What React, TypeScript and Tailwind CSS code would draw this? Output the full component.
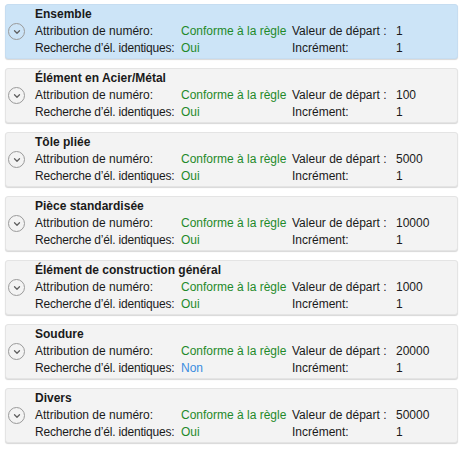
import { ChevronDown } from 'lucide-react';

interface Category {
  name: string;
  identical: 'Oui' | 'Non';
  start: string;
  increment: string;
  selected?: boolean;
}

const categories: Category[] = [
  { name: 'Ensemble', identical: 'Oui', start: '1', increment: '1', selected: true },
  { name: 'Élément en Acier/Métal', identical: 'Oui', start: '100', increment: '1' },
  { name: 'Tôle pliée', identical: 'Oui', start: '5000', increment: '1' },
  { name: 'Pièce standardisée', identical: 'Oui', start: '10000', increment: '1' },
  { name: 'Élément de construction général', identical: 'Oui', start: '1000', increment: '1' },
  { name: 'Soudure', identical: 'Non', start: '20000', increment: '1' },
  { name: 'Divers', identical: 'Oui', start: '50000', increment: '1' },
];

function CategoryCard({ cat }: { cat: Category }) {
  return (
    <div
      className={`relative h-[55px] rounded-[3px] border shadow-[0_1px_1px_rgba(0,0,0,0.16)] ${
        cat.selected ? 'bg-[#cce4f7] border-[#c6ddf1]' : 'bg-[#f3f3f3] border-[#e4e4e4]'
      }`}
    >
      {/* Expander */}
      <div className="absolute left-[2px] top-[18px] flex h-[17px] w-[17px] items-center justify-center rounded-full border border-[#9a9a9a]">
        <ChevronDown className="mt-[1px] h-[10px] w-[10px] text-[#606060]" strokeWidth={3} />
      </div>

      <div className="whitespace-nowrap pl-[29px] pt-[1px] text-[12px] leading-[17px] text-[#1a1a1a]">
        <div className="font-bold">{cat.name}</div>
        <div className="grid grid-cols-[146px_111px_104px_1fr]">
          <span>Attribution de numéro:</span>
          <span className="text-[#1f8a2a]">Conforme à la règle</span>
          <span>Valeur de départ :</span>
          <span>{cat.start}</span>
          <span className="tracking-[-0.2px]">Recherche d’él. identiques:</span>
          <span className={cat.identical === 'Oui' ? 'text-[#1f8a2a]' : 'text-[#3a8de0]'}>{cat.identical}</span>
          <span>Incrément:</span>
          <span>{cat.increment}</span>
        </div>
      </div>
    </div>
  );
}

export default function App() {
  return (
    <div
      className="h-[451px] w-[463px] bg-white pl-[5px] pr-[5px] pt-[4px]"
      style={{ fontFamily: '"Liberation Sans", Arial, sans-serif' }}
    >
      <div className="flex flex-col gap-[9px]">
        {categories.map(cat => (
          <CategoryCard key={cat.name} cat={cat} />
        ))}
      </div>
    </div>
  );
}
